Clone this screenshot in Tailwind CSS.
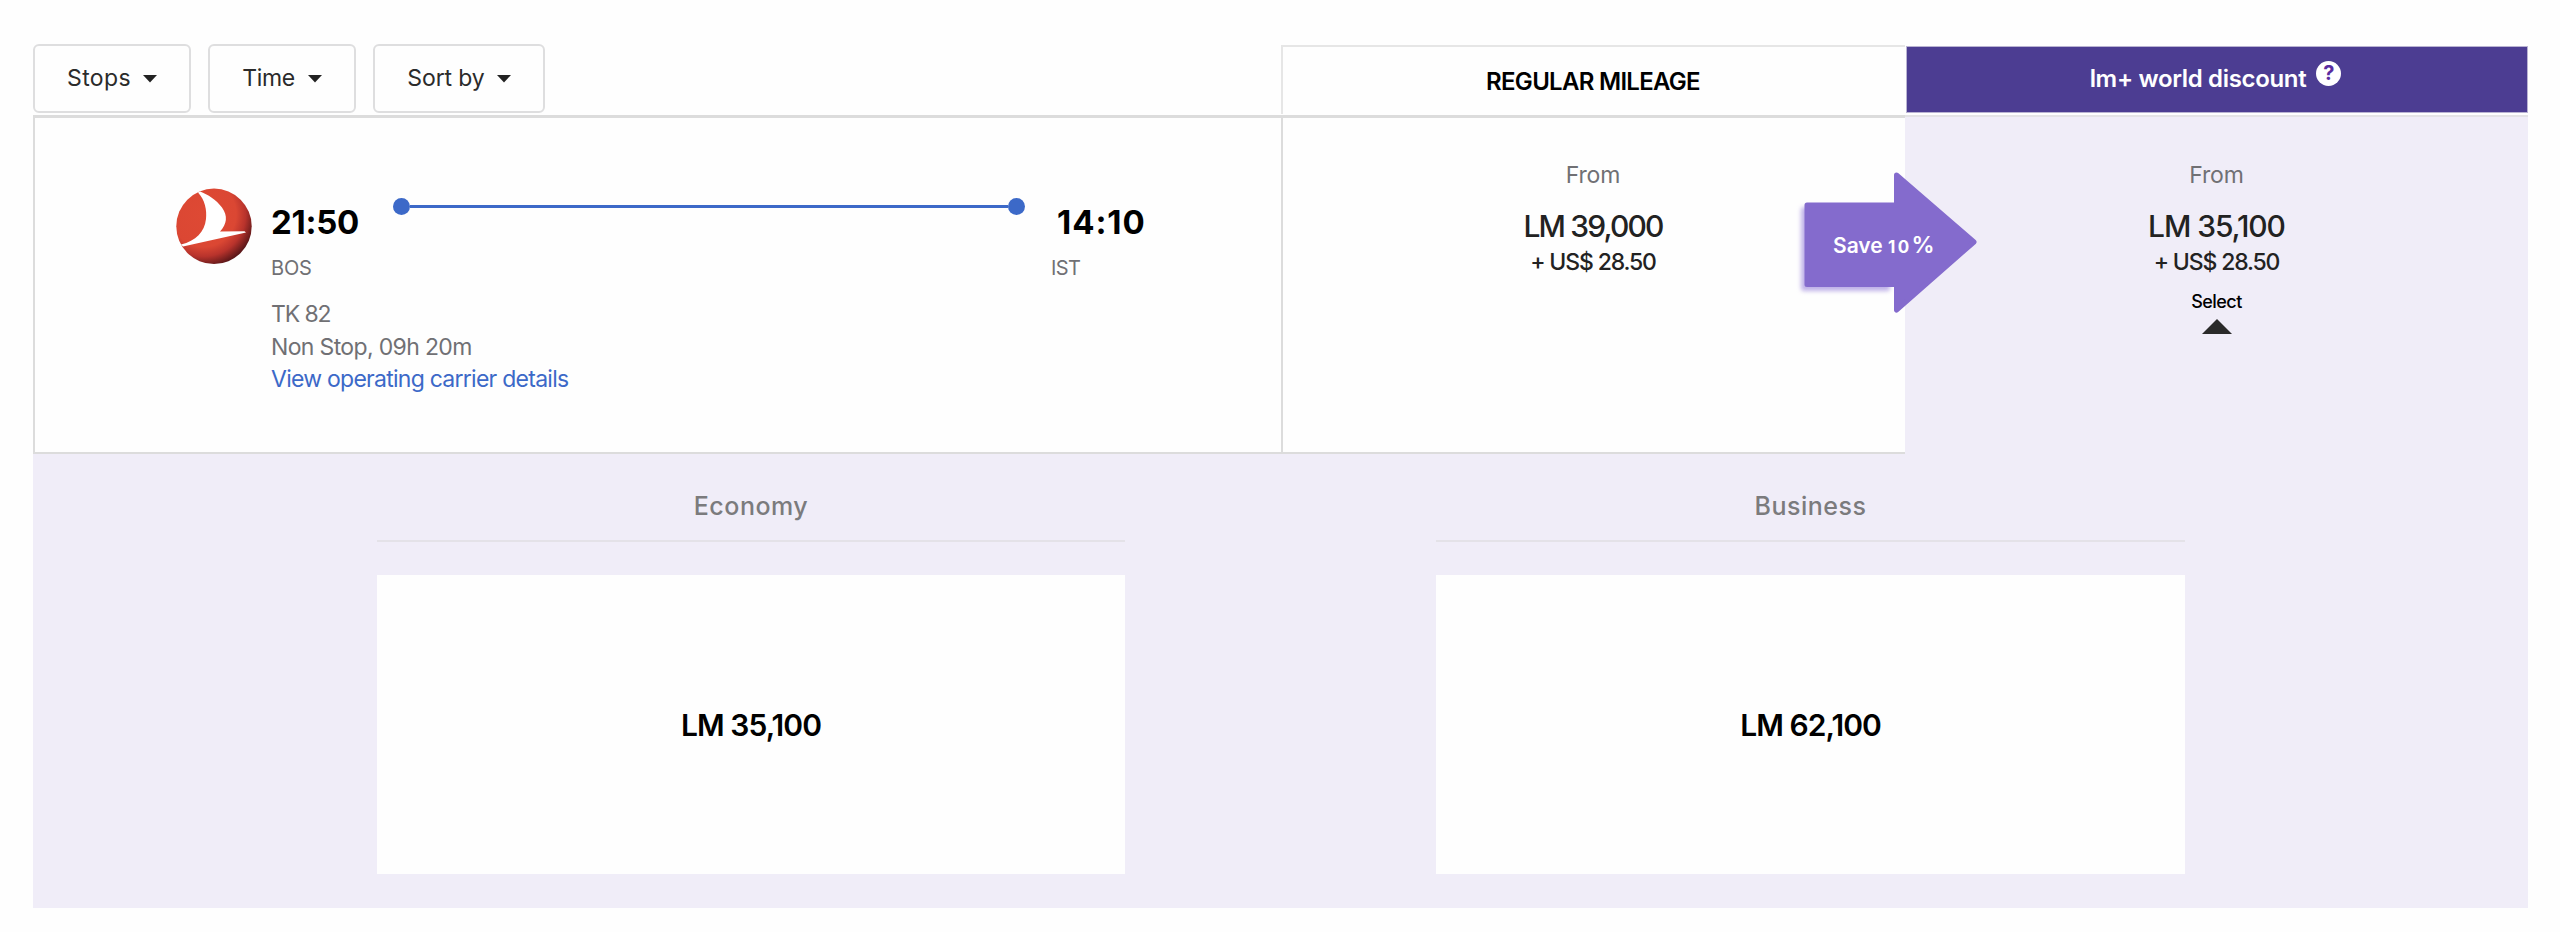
<!DOCTYPE html>
<html lang="en">
<head>
    <meta charset="UTF-8">
    <meta name="viewport" content="width=device-width, initial-scale=1.0">
    <title>Flight results</title>
    <script src="https://cdn.jsdelivr.net/npm/@tailwindcss/browser@4"></script>
</head>
<body class="min-h-screen bg-[#fefefe] font-['Inter','Liberation_Sans',sans-serif] text-[#222]">
    <div class="ml-[33px] pt-11 w-[2495px]">

        <!-- Filters and column headings -->
        <div class="flex h-[115px] -mt-11 pt-11">
            <div class="flex gap-[17px] w-[1248px] text-[23px] text-[#2b2b2b]">
                <button class="flex items-center justify-center gap-[12px] w-[158px] h-[69px] border-2 border-[#dededf] rounded-md">
                    <span class="tracking-[0.39px]">Stops</span>
                    <svg class="w-[14px] h-[8px]" viewBox="0 0 14 8"><path d="M0 0h14L7 7.500z" fill="#222"/></svg>
                </button>
                <button class="flex items-center justify-center gap-[13px] w-[148px] h-[69px] border-2 border-[#dededf] rounded-md">
                    <span class="tracking-[-0.35px]">Time</span>
                    <svg class="w-[14px] h-[8px]" viewBox="0 0 14 8"><path d="M0 0h14L7 7.500z" fill="#222"/></svg>
                </button>
                <button class="flex items-center justify-center gap-[12px] w-[172px] h-[69px] border-2 border-[#dededf] rounded-md">
                    <span class="tracking-[-0.12px]">Sort by</span>
                    <svg class="w-[14px] h-[8px]" viewBox="0 0 14 8"><path d="M0 0h14L7 7.500z" fill="#222"/></svg>
                </button>
            </div>
            <div class="flex items-center justify-center w-[624px] h-[69px] mt-px pt-[3px] pr-[2px] border-t-2 border-l-2 border-[#e6e6e6] text-2xl font-semibold text-black tracking-[-0.71px]">REGULAR MILEAGE</div>
            <div class="flex items-center justify-center gap-[10px] w-[622px] h-[67px] mt-[2px] ml-px pb-[2px] pr-[3px] bg-[#4c3d92] border border-[#b9b3d2] text-2xl font-semibold text-white tracking-[-0.33px]">
                <span>lm+ world discount</span>
                <span class="flex items-center justify-center size-[25px] -mt-[11px] rounded-full bg-white text-[#5a2ca0] text-[20px] font-bold tracking-normal">?</span>
            </div>
        </div>

        <!-- Flight row -->
        <div class="relative flex h-[339px]">
            <div class="flex items-start w-[1248px] pl-[141px] pt-[70px] bg-[#fefefe] border-t-3 border-l-2 border-b-2 border-[#dcdcdc]">
                <svg class="size-[76px] shrink-0" viewBox="0 0 76 76">
                    <defs>
                        <radialGradient id="ball" cx="0.36" cy="0.34" r="0.7">
                            <stop offset="0" stop-color="#de4934"/>
                            <stop offset="0.62" stop-color="#db4733"/>
                            <stop offset="0.8" stop-color="#b8332c"/>
                            <stop offset="1" stop-color="#5c1719"/>
                        </radialGradient>
                    </defs>
                    <circle cx="38" cy="38.3" r="37.7" fill="url(#ball)"/>
                    <path d="M22 4.5C29 12 31 22 30 31C28.500 44 20 53 5 56.500L7 58.500L70 44.600L68.500 43.200L44 43.500C51 36 52 28 46 19.500C40 11.500 32 6.500 24 3.500Z" fill="#fff"/>
                </svg>
                <div class="ml-[19px] mt-[14px]">
                    <div class="flex items-start">
                        <div class="w-[122px]">
                            <div class="text-[33px] leading-10 font-bold text-black tracking-[-0.28px]">21:50</div>
                            <div class="mt-3 text-[20px] leading-7 text-[#707074] tracking-[-0.19px]">BOS</div>
                        </div>
                        <div class="flex items-center w-[632px] h-[18px] -mt-[5px]">
                            <span class="size-[17px] rounded-full bg-[#3c69c8]"></span>
                            <span class="flex-1 h-[3px] bg-[#3c69c8]"></span>
                            <span class="size-[17px] rounded-full bg-[#3c69c8]"></span>
                        </div>
                        <div class="pl-[26px]">
                            <div class="pl-[6px] text-[33px] leading-10 font-bold text-black tracking-[0.93px]">14:10</div>
                            <div class="mt-3 text-[20px] leading-7 text-[#707074] tracking-[-0.6px]">IST</div>
                        </div>
                    </div>
                    <div class="mt-[16px] text-[23px] leading-[32.5px] text-[#707074]">
                        <div class="tracking-[-1.12px]">TK 82</div>
                        <div class="tracking-[-0.65px]">Non Stop, 09h 20m</div>
                        <a class="block text-[#3c69c8] tracking-[-0.74px]">View operating carrier details</a>
                    </div>
                </div>
            </div>

            <div class="flex flex-col items-center w-[624px] pt-[41px] pr-[2px] bg-[#fefefe] border-t-3 border-l-2 border-b-2 border-[#dcdcdc]">
                <div class="text-[23px] leading-8 text-[#707074] tracking-[-0.16px]">From</div>
                <div class="mt-[15px] text-[30px] leading-10 font-medium tracking-[-1.85px]">LM 39,000</div>
                <div class="text-[23px] leading-8 font-medium tracking-[-1.15px]">+ US$ 28.50</div>
            </div>

            <div class="flex flex-col items-center w-[623px] pt-[42px] bg-[#f0edf8] border-t-2 border-[#e4e3e6]">
                <div class="text-[23px] leading-8 text-[#707074] tracking-[-0.16px]">From</div>
                <div class="mt-[15px] text-[30px] leading-10 font-medium tracking-[-1.09px]">LM 35,100</div>
                <div class="text-[23px] leading-8 font-medium tracking-[-1.15px]">+ US$ 28.50</div>
                <div class="mt-3 text-[18px] leading-6 font-medium text-black tracking-[-0.54px]">Select</div>
                <svg class="mt-[5px] w-[30px] h-[15px]" viewBox="0 0 30 15"><path d="M15 0L30 15H0z" fill="#2a2a2a"/></svg>
            </div>

            <!-- Discount arrow over both fare columns -->
            <div class="absolute left-[1766px] top-[53px] w-[182px] h-[150px]">
                <svg class="w-[182px] h-[150px] overflow-visible" viewBox="0 0 182 150">
                    <rect x="2" y="39" width="89" height="84" rx="3" fill="#bfb1e8" class="blur-[2px]"/>
                    <path d="M8 37H97.500V7L175 74L97.500 142V116.500H8Z" fill="#846bcd" stroke="#846bcd" stroke-width="5" stroke-linejoin="round"/>
                </svg>
                <div class="absolute left-[34px] top-[65px] text-[21px] leading-6 font-semibold text-white whitespace-nowrap">Save <span class="text-[17px] font-bold tracking-[2.4px]">10</span><span class="text-[23px]">%</span></div>
            </div>
        </div>

        <!-- Cabin fares -->
        <div class="flex gap-[311px] h-[454px] pl-[344px] pt-[33px] bg-[#f0edf8]">
            <div class="w-[748px]">
                <div class="h-[55px] pt-px border-b-2 border-[#e4e2e8] text-center text-[25px] leading-9 font-medium text-[#7b7b7d] tracking-[0.5px]">Economy</div>
                <div class="flex items-center justify-center h-[299px] mt-[33px] pt-px bg-[#fefefe] text-[30px] font-semibold text-black tracking-[-0.95px]">LM 35,100</div>
            </div>
            <div class="w-[749px]">
                <div class="h-[55px] pt-px border-b-2 border-[#e4e2e8] text-center text-[25px] leading-9 font-medium text-[#7b7b7d] tracking-[0.5px]">Business</div>
                <div class="flex items-center justify-center h-[299px] mt-[33px] pt-px bg-[#fefefe] text-[30px] font-semibold text-black tracking-[-0.95px]">LM 62,100</div>
            </div>
        </div>
    </div>
</body>
</html>
